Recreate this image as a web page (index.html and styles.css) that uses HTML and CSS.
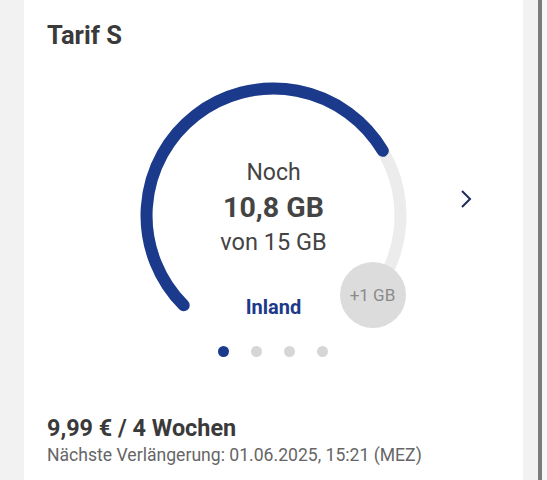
FILE: index.html
```html
<!DOCTYPE html>
<html lang="de">
<head>
<meta charset="utf-8">
<title>Tarif S</title>
<link rel="stylesheet" href="styles.css">
</head>
<body>
<div class="page">
  <main class="card">
    <h1 class="title">Tarif S</h1>
    <div class="gauge-row">
      <div class="gauge">
        <svg class="gauge-svg" width="280" height="260" viewBox="0 0 280 260">
          <path d="M49.7 229.3 A127 127 0 1 1 229.3 229.3" fill="none" stroke="#ececec" stroke-width="12" stroke-linecap="round"/>
          <path d="M49.7 229.3 A127 127 0 1 1 248.8 74.8" fill="none" stroke="#1b3a8c" stroke-width="12" stroke-linecap="round"/>
        </svg>
        <div class="gauge-text">
          <div class="noch">Noch</div>
          <div class="amount">10,8 GB</div>
          <div class="total">von 15 GB</div>
          <div class="region">Inland</div>
        </div>
        <div class="badge">+1 GB</div>
      </div>
      <svg class="chevron" width="24" height="24" viewBox="0 0 24 24">
        <path d="M8 4 L16 12 L8 20" fill="none" stroke="#1f2b5a" stroke-width="2"/>
      </svg>
    </div>
    <div class="dots">
      <span class="dot active"></span>
      <span class="dot"></span>
      <span class="dot"></span>
      <span class="dot"></span>
    </div>
    <div class="price">9,99 € / 4 Wochen</div>
    <div class="renewal">Nächste Verlängerung: 01.06.2025, 15:21 (MEZ)</div>
  </main>
  <div class="scroll-gutter"></div>
  <div class="scroll-bar"></div>
  <div class="scroll-edge"></div>
</div>
</body>
</html>
```

FILE: styles.css
```css
* { box-sizing: border-box; }
html, body {
  margin: 0;
  padding: 0;
  background: #f2f2f2;
  font-family: Roboto, "Liberation Sans", sans-serif;
  overflow: hidden;
}
.page {
  display: flex;
  height: 480px;
  padding-left: 24px;
}
.card {
  width: 499px;
  height: 480px;
  background: #ffffff;
  padding: 21px 24px 0 23px;
}
.scroll-gutter {
  width: 15px;
  background: #f2f2f2;
}
.scroll-bar {
  width: 4px;
  background: #7b7b7b;
}
.scroll-edge {
  flex: 1;
  background: #f7f7f7;
}
.title {
  margin: 0;
  font-size: 25.5px;
  line-height: 28px;
  font-weight: 700;
  color: #3a3a3a;
}
.gauge-row {
  margin-top: 27px;
  margin-left: 1px;
  display: grid;
  grid-template-columns: 1fr auto 1fr;
  height: 260px;
}
.gauge {
  grid-column: 2;
  position: relative;
  width: 280px;
  height: 260px;
}
.gauge-svg {
  display: block;
}
.gauge-text {
  position: absolute;
  left: 0;
  right: 0;
  top: 85px;
  display: flex;
  flex-direction: column;
  align-items: center;
  color: #444444;
}
.noch {
  font-size: 23px;
  line-height: 24px;
}
.amount {
  margin-top: 5px;
  font-size: 28.5px;
  font-weight: 700;
  line-height: 36px;
}
.total {
  font-size: 23.5px;
  line-height: 32px;
}
.region {
  margin-top: 37px;
  font-size: 20px;
  font-weight: 700;
  line-height: 24px;
  color: #1d3a8a;
}
.badge {
  position: absolute;
  left: 206px;
  top: 186px;
  width: 66px;
  height: 66px;
  border-radius: 50%;
  background: #dcdcdc;
  color: #8a8a8a;
  font-size: 17px;
  display: flex;
  align-items: center;
  justify-content: center;
}
.chevron {
  grid-column: 3;
  justify-self: end;
  margin-right: 21px;
  margin-top: 111px;
}
.dots {
  margin-top: 10px;
  display: flex;
  justify-content: center;
  gap: 22.3px;
}
.dot {
  width: 11px;
  height: 11px;
  border-radius: 50%;
  background: #d6d6d6;
}
.dot.active {
  background: #1b3a8c;
}
.price {
  margin-top: 56px;
  font-size: 23.4px;
  font-weight: 700;
  line-height: 30px;
  color: #3a3a3a;
}
.renewal {
  font-size: 17.6px;
  line-height: 24px;
  color: #666666;
}
```
